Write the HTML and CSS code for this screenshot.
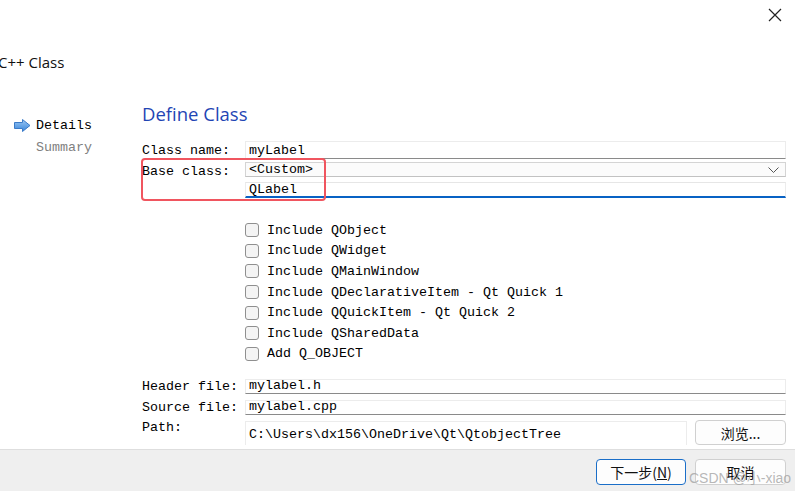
FILE: index.html
```html
<!DOCTYPE html>
<html>
<head>
<meta charset="utf-8">
<link rel="stylesheet" href="styles.css">
</head>
<body>
<div class="window">
  <div class="titlebar">
    <svg class="close" width="14" height="14" viewBox="0 0 14 14"><path d="M1 1 L13 13 M13 1 L1 13" stroke="#222" stroke-width="1.2" fill="none"/></svg>
  </div>
  <div class="wiz-title">C++ Class</div>
  <div class="main">
    <div class="side">
      <div class="step active">
        <svg class="arrow" width="17" height="13" viewBox="0 0 17 13"><defs><linearGradient id="g" x1="0" y1="0" x2="0" y2="1"><stop offset="0" stop-color="#9cc8f4"/><stop offset="1" stop-color="#3a86da"/></linearGradient></defs><path d="M0.5 3.5 H8.5 V0.5 L16 6.5 L8.5 12.5 V9.5 H0.5 Z" fill="url(#g)" stroke="#3b7bc8" stroke-width="1"/></svg>
        <span>Details</span>
      </div>
      <div class="step muted"><span>Summary</span></div>
    </div>
    <div class="content">
      <h1 class="heading">Define Class</h1>
      <div class="form">
        <div class="row r-name"><span class="label">Class name:</span><div class="field">myLabel</div></div>
        <div class="row r-base"><span class="label">Base class:</span><div class="field combo">&lt;Custom&gt;<svg class="chev" width="11" height="6" viewBox="0 0 11 6"><path d="M0.5 0.5 L5.5 5.5 L10.5 0.5" stroke="#555" fill="none"/></svg></div></div>
        <div class="row r-custom"><span class="label"></span><div class="field focus">QLabel</div></div>
        <div class="highlight"></div>
      </div>
      <div class="checks">
        <div class="check"><span class="box"></span>Include QObject</div>
        <div class="check"><span class="box"></span>Include QWidget</div>
        <div class="check"><span class="box"></span>Include QMainWindow</div>
        <div class="check"><span class="box"></span>Include QDeclarativeItem - Qt Quick 1</div>
        <div class="check"><span class="box"></span>Include QQuickItem - Qt Quick 2</div>
        <div class="check"><span class="box"></span>Include QSharedData</div>
        <div class="check"><span class="box"></span>Add Q_OBJECT</div>
      </div>
      <div class="files">
        <div class="row r-file"><span class="label">Header file:</span><div class="field">mylabel.h</div></div>
        <div class="row r-file"><span class="label">Source file:</span><div class="field">mylabel.cpp</div></div>
        <div class="row r-path"><span class="label">Path:</span><div class="field path">C:\Users\dx156\OneDrive\Qt\QtobjectTree</div><div class="btn browse">浏览...</div></div>
      </div>
    </div>
  </div>
  <div class="footer">
    <div class="btn primary">下一步(<u>N</u>)</div>
    <div class="btn">取消</div>
    <div class="watermark">CSDN @小-xiao</div>
  </div>
</div>
</body>
</html>
```

FILE: styles.css
```css
* { box-sizing: border-box; }
html, body { margin: 0; padding: 0; }
body {
  width: 795px;
  height: 491px;
  overflow: hidden;
  background: #fff;
  font-family: "Liberation Mono", "Noto Sans CJK SC", monospace;
  font-size: 13.33px;
  color: #000;
}
.window { position: relative; width: 795px; height: 491px; display: flex; flex-direction: column; }
.titlebar { height: 30px; display: flex; justify-content: flex-end; align-items: flex-start; padding: 8px 13px 0 0; }
.close { display: block; }
.wiz-title {
  font-family: "Open Sans", "Noto Sans", sans-serif;
  font-size: 15px;
  margin: 22px 0 0 -2px;
  height: 20px;
  line-height: 20px;
  color: #111;
}
.main { display: flex; flex: 1; padding-top: 27px; }
.side { width: 142px; padding-left: 14px; padding-top: 15px; }
.step { display: flex; align-items: center; height: 22px; gap: 5px; }
.step.muted { color: #808080; padding-left: 22px; }
.arrow { display: block; }
.content { flex: 1; padding-right: 9px; position: relative; }
.heading {
  font-family: "Open Sans", "Noto Sans", sans-serif;
  font-weight: normal;
  font-size: 18.5px;
  color: #1f45b4;
  margin: 0;
  height: 42px;
  line-height: 30px;
}
.form { position: relative; }
.row { display: flex; align-items: stretch; }
.label { width: 103px; flex: none; padding-top: 3px; line-height: 14px; }
.field {
  flex: 1;
  background: #fff;
  border: 1px solid #ececec;
  border-bottom: 1px solid #8a8a8a;
  padding: 0 0 0 3px;
  line-height: 15px;
  display: flex;
  align-items: flex-end;
  overflow: hidden;
  white-space: nowrap;
}
.r-name { height: 18px; margin-bottom: 3px; }
.r-base { height: 15px; margin-bottom: 5px; }
.r-custom { height: 16px; }
.combo { background: #fbfbfb; border: 1px solid #d4d4d4; border-bottom-color: #c2c2c2; align-items: center; justify-content: space-between; padding-right: 6px; line-height: 13px; }
.chev { display: block; }
.focus { border-bottom: 2px solid #0862c4; border-top-color: #e6e6e6; line-height: 13px; }
.highlight {
  position: absolute;
  left: -1px;
  top: 17px;
  width: 185px;
  height: 43px;
  border: 2px solid #f0555f;
  border-radius: 4px;
}
.checks { padding: 22px 0 0 103px; }
.check { display: flex; align-items: center; height: 20.6px; gap: 8px; white-space: nowrap; }
.box {
  width: 14px; height: 14px;
  border: 1px solid #8f8f8f;
  border-radius: 3px;
  background: #f4f4f4;
  flex: none;
}
.files { padding-top: 15px; }
.r-file { height: 15px; margin-bottom: 6px; }
.r-file .label { padding-top: 1px; }
.r-path { height: 24px; margin-top: 1px; }
.r-path .label { padding-top: 0; }
.path { border: 1px solid #ececec; border-bottom: none; align-items: center; padding-top: 2px; }
.btn {
  display: flex; align-items: center; justify-content: center;
  border: 1px solid #d0d0d0;
  border-radius: 4px;
  background: #fdfdfd;
  font-family: "Noto Sans CJK SC", "Liberation Mono", sans-serif;
  font-size: 14px;
  color: #111;
}
.browse { width: 91px; margin-left: 8px; height: 25px; margin-top: -1px; }
.footer {
  position: relative;
  height: 42px;
  background: #efefef;
  border-top: 1px solid #dedede;
  display: flex;
  justify-content: flex-end;
  gap: 9px;
  padding: 9px 9px 0 0;
}
.footer .btn { width: 91px; height: 26px; }
.footer .btn.primary { width: 90px; border: 1px solid #1a6ec8; }
.footer .btn u { text-decoration: underline; }
.watermark {
  position: absolute;
  left: 689px;
  top: 17px;
  font-family: "Liberation Sans", "Noto Sans CJK SC", sans-serif;
  font-size: 14px;
  color: rgba(160,160,160,0.75);
  pointer-events: none;
}
```
